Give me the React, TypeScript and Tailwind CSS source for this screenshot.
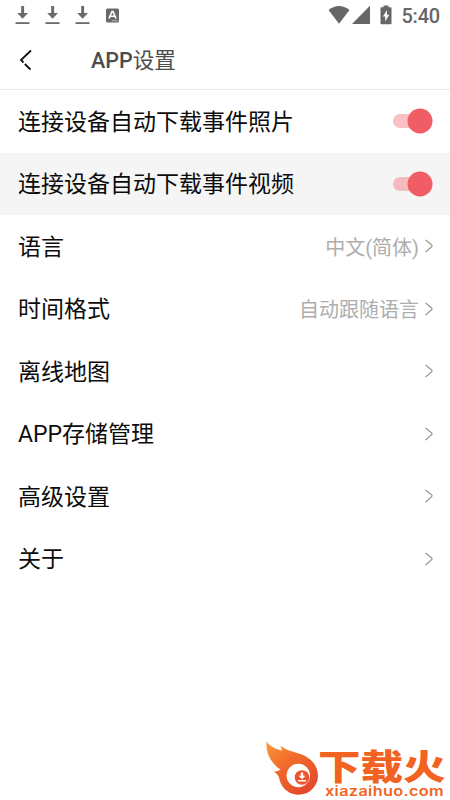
import { useState } from "react";

interface SettingItem {
  label: string;
  value?: string;
}

const items: SettingItem[] = [
  { label: "语言", value: "中文(简体)" },
  { label: "时间格式", value: "自动跟随语言" },
  { label: "离线地图" },
  { label: "APP存储管理" },
  { label: "高级设置" },
  { label: "关于" },
];

function DownloadIcon() {
  return (
    <svg className="w-[15px] h-5" viewBox="0 0 15 20" fill="#6a6a6a">
      <path d="M6.2 1h2.900v7H13L7.600 13.800 2.200 8h4z" />
      <path d="M.5 17.200h14V19H.5z" />
    </svg>
  );
}

function StatusBar() {
  return (
    <div className="h-[30px] flex items-center justify-between pl-[15px] pr-[10px]">
      <div className="flex items-center gap-[15px]">
        <DownloadIcon />
        <DownloadIcon />
        <DownloadIcon />
        <svg className="w-[15px] h-[15px]" viewBox="0 0 15 15">
          <rect x="1" y="0.5" width="13" height="14" rx="1.5" fill="#6a6a6a" />
          <path d="M4 10.500 7 3.500h1l3 7M5.200 8.300h4.600" fill="none" stroke="#fff" strokeWidth="1.6" />
          <path d="M7.500 12.700h5" stroke="#fff" strokeDasharray="1 1" />
        </svg>
      </div>
      <div className="flex items-center text-[#666]">
        <svg className="w-[22px] h-5" viewBox="0 0 22 20" fill="currentColor">
          <path d="M.5 5Q11-3 21.500 5L11 18.800z" />
        </svg>
        <svg className="ml-[2px] w-[18px] h-5" viewBox="0 0 18 20" fill="currentColor">
          <path d="M18 .8v18.200H0z" />
        </svg>
        <svg className="ml-[10px] w-3 h-5" viewBox="0 0 12 20">
          <path
            d="M3.500.5h5v1.800h2.300q.7 0 .7.700v15.500q0 .7-.7.700H1.200q-.7 0-.7-.7V3q0-.7.7-.7h2.300z"
            fill="currentColor"
          />
          <path d="M7 5 2.900 11.500h2.300V16.500l4.100-6.700H7z" fill="#fff" />
        </svg>
        <span className="ml-[9px] pt-px text-[20px] leading-[30px] font-medium tracking-[-0.2px]">5:40</span>
      </div>
    </div>
  );
}

function Header() {
  return (
    <header className="h-[60px] flex items-center pl-[19px] border-b border-[#ececec]">
      <button aria-label="Back">
        <svg className="w-[13px] h-[22px]" viewBox="0 0 13 22" fill="none" stroke="#111" strokeWidth="1.8">
          <path d="M12 1.500 2 11l2.500 2.500M5.800 15l5.700 5.500" />
        </svg>
      </button>
      <h1 className="ml-[59px] pt-[3px] text-[21.5px] font-medium text-[#4c4c4c]">
        APP<span className="font-normal">设置</span>
      </h1>
    </header>
  );
}

interface ToggleRowProps {
  label: string;
  on: boolean;
  onChange: () => void;
  className?: string;
}

function ToggleRow({ label, on, onChange, className = "" }: ToggleRowProps) {
  return (
    <div className={`h-[62.5px] flex items-center justify-between pl-[18px] pr-[17px] ${className}`}>
      <span className="pt-[3px] text-[23px] text-[#0c0c0c]">{label}</span>
      <button role="switch" aria-checked={on} aria-label={label} onClick={onChange}>
        <svg className={`w-10 h-[26px] ${on ? "" : "-scale-x-100 grayscale"}`} viewBox="0 0 40 26">
          <rect x="0" y="6" width="36" height="14" rx="7" fill="#f05d65" fillOpacity="0.38" />
          <circle cx="27" cy="13" r="12.500" fill="#f05d65" />
        </svg>
      </button>
    </div>
  );
}

function LinkRow({ label, value }: SettingItem) {
  return (
    <div className="h-[62.5px] flex items-center pl-[18px] pr-[17px]">
      <span className="pt-[3px] text-[23px] text-[#0c0c0c]">{label}</span>
      <span className="ml-auto pt-[3px] text-[20px] text-[#adadad]">{value}</span>
      <svg
        className="ml-[6px] w-2 h-[14px]"
        viewBox="0 0 8 14"
        fill="none"
        stroke="#858585"
        strokeWidth="1.100"
      >
        <path d="M.5.8 7.500 6.700M7.200 7.200.5 13.200" />
      </svg>
    </div>
  );
}

function Logo() {
  return (
    <svg className="absolute left-[260px] top-[735px] w-[190px] h-[65px]" viewBox="0 0 190 65">
      <defs>
        <linearGradient id="flame" x1="0" y1="0" x2="0.700" y2="1">
          <stop offset="0" stopColor="#fb9a3c" />
          <stop offset="0.450" stopColor="#f26a2c" />
          <stop offset="1" stopColor="#e34a2b" />
        </linearGradient>
      </defs>
      <path
        d="M6.800 6.500C10 12 16 14 22 15.500 21.500 13.500 21 12 20.500 10.500 24 14 29 15.500 37 18 49 21 58 29 58 41A19.500 19.500 0 0 1 19.500 44.500C19 41.500 18 39.500 13.500 36.500 16.500 36.500 18.500 36 20.500 34.500 12 29 5 18 6.800 6.500z"
        fill="url(#flame)"
      />
      <circle cx="38.300" cy="40.500" r="11.700" fill="#fff" />
      <circle cx="42" cy="42.500" r="7.300" fill="#ec5530" />
      <path d="M40.800 37.500h2.400v3.300h2.300L42 44.300l-3.500-3.500h2.300zM38 45h8v1.500h-8z" fill="#fff" />
      <text
        transform="translate(58 44.800) scale(1 0.820)"
        fontFamily="'Noto Sans CJK SC', sans-serif"
        fontSize="42.500"
        fontWeight="900"
        fill="#f26322"
      >
        下载火
      </text>
      <text
        x="65"
        y="60.500"
        fontFamily="Inter, sans-serif"
        fontSize="13.500"
        fontWeight="600"
        letterSpacing="0.3"
        textLength="119"
        lengthAdjust="spacingAndGlyphs"
        fill="#f26322"
      >
        xiazaihuo.com
      </text>
    </svg>
  );
}

export default function App() {
  const [photos, setPhotos] = useState(true);
  const [videos, setVideos] = useState(true);

  return (
    <div className="relative w-[450px] h-[800px] overflow-hidden bg-white font-[Roboto,'Noto_Sans_CJK_SC',sans-serif]">
      <StatusBar />
      <Header />
      <ToggleRow label="连接设备自动下载事件照片" on={photos} onChange={() => setPhotos(!photos)} />
      <ToggleRow
        label="连接设备自动下载事件视频"
        on={videos}
        onChange={() => setVideos(!videos)}
        className="bg-[#f5f5f5]"
      />
      {items.map((item) => (
        <LinkRow key={item.label} {...item} />
      ))}
      <Logo />
    </div>
  );
}
